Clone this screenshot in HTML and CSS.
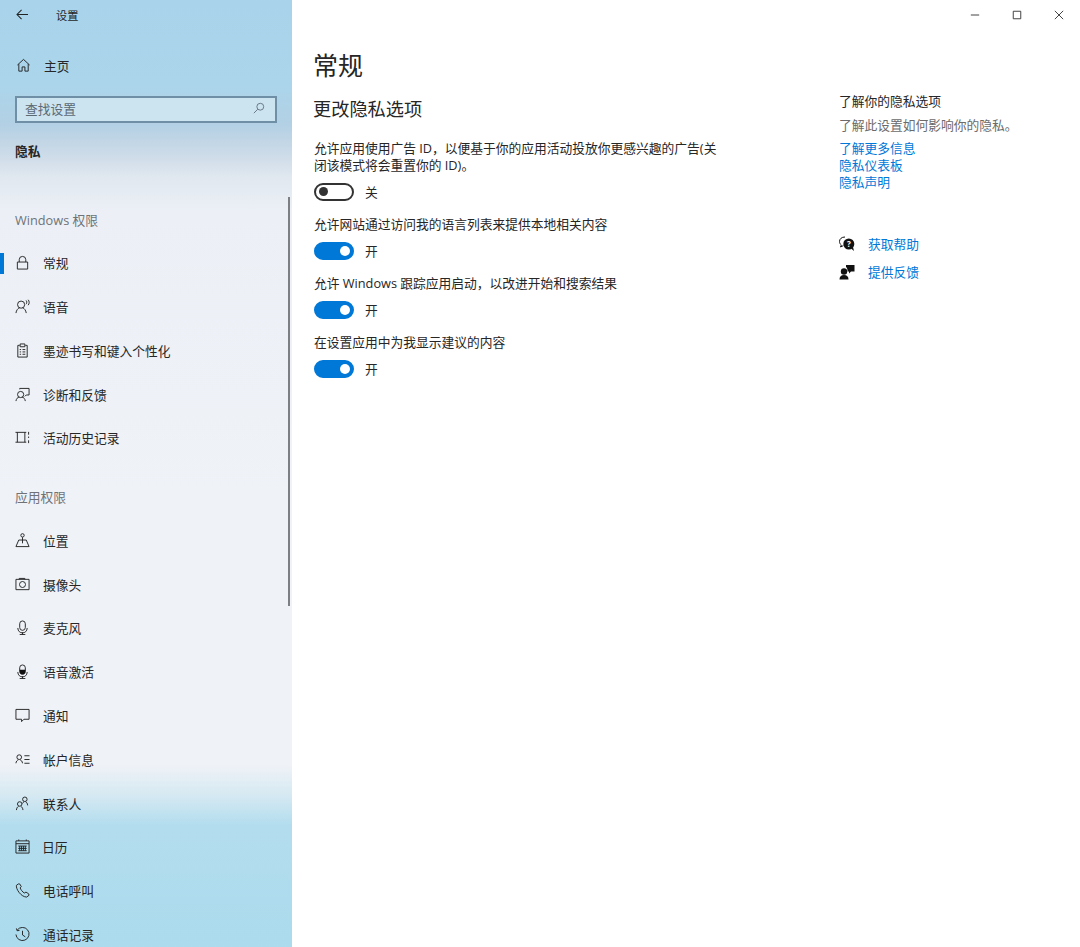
FILE: index.html
```html
<!DOCTYPE html>
<html lang="zh-CN">
<head>
  <meta charset="UTF-8" />
  <title>设置</title>
  <link rel="stylesheet" href="styles.css">
</head>
<body>

  <aside class="sidebar">
    <div class="titlebar">
      <svg class="back" viewBox="0 0 14 12"><path d="M13 6H1M6 1L1 6l5 5"/></svg>
      <span class="app-title">设置</span>
    </div>

    <a class="home-row">
      <svg class="icon" viewBox="0 0 16 16"><path d="M1.500 7.500L8 1.500l6.500 6M3 6.500v7.500h3.500v-4.500h3V14H13V6.500"/></svg>
      <span>主页</span>
    </a>

    <div class="search">
      <span>查找设置</span>
      <svg class="search-icon" viewBox="0 0 14 14"><circle cx="8.500" cy="5.500" r="4"/><path d="M5.500 8.500L1 13"/></svg>
    </div>

    <div class="crumb">隐私</div>

    <div class="group-label first">Windows 权限</div>
    <nav>
      <a class="nav-item active">
        <svg class="icon" viewBox="0 0 16 16"><path d="M2.500 7.500h11V15h-11zM4.500 7.500V5a3.500 3.500 0 0 1 7 0v2.500"/></svg>
        <span>常规</span>
      </a>
      <a class="nav-item">
        <svg class="icon" viewBox="0 0 16 16"><circle cx="6.500" cy="6" r="3.800"/><path d="M1 15c.4-3 2.200-5.200 4-5.600M12 15c-.4-3-2.200-5.200-4-5.600M11.800 1.500c1 .8 1 3 0 4M14 .8c1.500 1.400 1.500 4.300 0 5.800"/></svg>
        <span>语音</span>
      </a>
      <a class="nav-item">
        <svg class="icon" viewBox="0 0 16 16"><path d="M5 2.500H3v12.500h10V2.500h-2M5.500 1h5v3h-5zM5 7h1.500M5 9.500h1.500M5 12h1.500M8 7h3M8 9.500h3M8 12h3"/></svg>
        <span>墨迹书写和键入个性化</span>
      </a>
      <a class="nav-item">
        <svg class="icon" viewBox="0 0 16 16"><circle cx="6" cy="8" r="3.300"/><path d="M1 15c.4-2.500 1.800-4 3.500-4.300M11 15c-.4-2.500-1.800-4-3.500-4.300M5 2.500V1.500h10v7h-3l-1.500 1.500"/></svg>
        <span>诊断和反馈</span>
      </a>
      <a class="nav-item">
        <svg class="icon" viewBox="0 0 16 16"><path d="M.5 2.500h11.500M.5 13h11.500M2.500 2.500V13M10.500 2.500V13M14.500 2v3M14.500 7v1.500M14.500 11v3"/></svg>
        <span>活动历史记录</span>
      </a>
    </nav>

    <div class="group-label">应用权限</div>
    <nav>
      <a class="nav-item">
        <svg class="icon" viewBox="0 0 16 16"><circle cx="8" cy="2.500" r="1.800"/><path d="M8 4.500V11M4 7.500h8M4 7.500L1 14.500h14l-3-7"/></svg>
        <span>位置</span>
      </a>
      <a class="nav-item">
        <svg class="icon" viewBox="0 0 16 16"><path d="M1 2.500h14v11H1zM4.500 2.500V1.500h6v1"/><circle cx="8" cy="8" r="3.200"/></svg>
        <span>摄像头</span>
      </a>
      <a class="nav-item">
        <svg class="icon" viewBox="0 0 16 16"><rect x="5" y="1" width="6" height="10" rx="3"/><path d="M3 8.500c0 7 10 7 10 0M8 13v2.500M5 15.500h6"/></svg>
        <span>麦克风</span>
      </a>
      <a class="nav-item">
        <svg class="icon" viewBox="0 0 16 16"><rect x="5" y="1" width="6" height="10" rx="3"/><path class="solid" d="M5 6h6v2a3 3 0 0 1-6 0z"/><path d="M3 8.500c0 7 10 7 10 0M8 13v2.500M5 15.500h6"/></svg>
        <span>语音激活</span>
      </a>
      <a class="nav-item">
        <svg class="icon" viewBox="0 0 16 16"><path d="M1 1.500h14v10.500H9.500L7 14.500V12H1z"/></svg>
        <span>通知</span>
      </a>
      <a class="nav-item">
        <svg class="icon" viewBox="0 0 16 16"><circle cx="4.500" cy="5.500" r="2.500"/><path d="M1 12c.2-2 1.200-3.200 2.500-3.500M8 12c-.2-2-1.200-3.200-2.500-3.500M10 4h5.500M10 8h5.500M10 12h5.500"/></svg>
        <span>帐户信息</span>
      </a>
      <a class="nav-item">
        <svg class="icon" viewBox="0 0 16 16"><circle cx="5" cy="8.500" r="2.400"/><circle cx="10.500" cy="3.500" r="2.400"/><path d="M1.500 15c.2-2 1-3.400 2.200-3.800M8.500 15c-.2-2-1-3.400-2.200-3.800M13.500 10c-.2-2-1-3.400-2.200-3.800M8 8c.4-.9.800-1.500 1.500-1.800"/></svg>
        <span>联系人</span>
      </a>
      <a class="nav-item">
        <svg class="icon" viewBox="0 0 16 16"><path d="M1 2h14v13H1zM1 5h14M4 .5V2M12 .5V2M3.500 7.500h9M3.500 10h9M3.500 12.500h9M5 7.500v5M7 7.500v5M9 7.500v5M11 7.500v5"/></svg>
        <span class="tight">日历</span>
      </a>
      <a class="nav-item">
        <svg class="icon" viewBox="0 0 16 16"><path d="M3.500 1L1.500 2.500C.8 6.500 6.500 15 12.500 15l2.500-2-.5-1.500-2.800-1.800-1.800 1C8 9.500 6 7 5.500 5.200l1.200-1.400L5 1z"/></svg>
        <span>电话呼叫</span>
      </a>
      <a class="nav-item">
        <svg class="icon" viewBox="0 0 16 16"><path d="M2.200 3.500A7 7 0 1 1 1 8M1.500 1.500l.7 2.500 2.600-.4M8 4v4.500l3 2"/></svg>
        <span>通话记录</span>
      </a>
    </nav>

    <div class="scrollbar"></div>
  </aside>

  <div class="window">
    <div class="window-controls">
      <svg viewBox="0 0 12 12"><path d="M1 6h10"/></svg>
      <svg viewBox="0 0 12 12"><path d="M1.500 1.500h9v9h-9z"/></svg>
      <svg viewBox="0 0 12 12"><path d="M1 1l10 10M11 1L1 11"/></svg>
    </div>

    <div class="columns">
      <main>
        <h1>常规</h1>
        <h2>更改隐私选项</h2>

        <p class="option-text">允许应用使用广告 ID，以便基于你的应用活动投放你更感兴趣的广告(关闭该模式将会重置你的 ID)。</p>
        <div class="toggle-row first"><span class="toggle"></span><span>关</span></div>

        <p class="option-text">允许网站通过访问我的语言列表来提供本地相关内容</p>
        <div class="toggle-row"><span class="toggle on"></span><span>开</span></div>

        <p class="option-text">允许 Windows 跟踪应用启动，以改进开始和搜索结果</p>
        <div class="toggle-row"><span class="toggle on"></span><span>开</span></div>

        <p class="option-text">在设置应用中为我显示建议的内容</p>
        <div class="toggle-row"><span class="toggle on"></span><span>开</span></div>
      </main>

      <aside class="help">
        <h3>了解你的隐私选项</h3>
        <p>了解此设置如何影响你的隐私。</p>
        <a>了解更多信息</a>
        <a>隐私仪表板</a>
        <a>隐私声明</a>

        <div class="help-links">
          <a class="help-row">
            <svg viewBox="0 0 16 16"><path d="M6 1C2.500 1 .5 3 .5 5.500c0 1.500.7 2.700 1.800 3.500L1.500 11l2.800-1.300"/><circle class="solid" cx="9.800" cy="8" r="5.500"/><path class="solid" d="M12 12.500l3 2.500-1-4z"/><text x="9.800" y="11" class="mark">?</text></svg>
            <span>获取帮助</span>
          </a>
          <a class="help-row">
            <svg viewBox="0 0 16 16"><circle class="solid" cx="5" cy="7.500" r="3.200"/><path class="solid" d="M.5 15.500c0-3 1.500-4.500 4.500-4.500s4.500 1.500 4.500 4.500zM7 1h8.500v6.500H12L10 9.500V7.500H8.500c.2-2-.3-3.500-1.500-4.500z"/></svg>
            <span>提供反馈</span>
          </a>
        </div>
      </aside>
    </div>
  </div>

</body>
</html>
```

FILE: styles.css
```css
* { box-sizing: border-box; }

html, body { height: 100%; }

body {
  margin: 0;
  display: flex;
  overflow: hidden;
  background: #fff;
  color: #262626;
  font-family: "Open Sans", "Noto Sans CJK SC", "Liberation Sans", sans-serif;
  font-size: 12.75px;
  font-weight: 400;
}

/* sidebar */
.sidebar {
  position: relative;
  flex: 0 0 292px;
  height: 947px;
  overflow: hidden;
  background: linear-gradient(180deg,
    #a8d3ea 0, #abd5eb 85px, #b3d0e4 125px, #c9d9e7 150px, #e1e8f0 178px,
    #ecf0f6 212px, #eff2f7 500px, #eff2f7 765px, #d6e9f2 795px, #b3ddee 825px, #abdbed 947px);
}

.titlebar {
  display: flex;
  align-items: center;
  height: 30px;
  padding: 0 0 1px 16px;
}
.back {
  width: 13px;
  height: 11px;
  fill: none;
  stroke: #222;
  stroke-width: 1.1;
}
.app-title {
  margin-left: 27px;
  font-size: 11.2px;
}

.home-row {
  display: flex;
  align-items: center;
  gap: 13px;
  height: 44px;
  margin-top: 13px;
  padding-left: 16px;
}

.icon {
  flex: 0 0 15px;
  width: 15px;
  height: 15px;
  fill: none;
  stroke: #222;
  stroke-width: 1;
}
.icon .solid { fill: #111; stroke: none; }

.search {
  display: flex;
  justify-content: space-between;
  align-items: center;
  height: 27px;
  margin: 9px 15px 0;
  padding: 0 10px 3px 8px;
  border: 2px solid #6f8fa6;
  background: #cce3f0;
  color: #5b6a75;
}
.search-icon {
  width: 12px;
  height: 12px;
  fill: none;
  stroke: #5b6a75;
  stroke-width: 1;
}

.crumb {
  margin: 19px 0 0 15px;
  font-weight: 700;
  line-height: 18px;
}

.group-label {
  margin: 25.6px 0 0 15px;
  height: 33px;
  line-height: 24px;
  color: #6f7377;
}
.group-label.first { margin-top: 47.8px; }

.nav-item {
  position: relative;
  display: flex;
  align-items: center;
  gap: 13px;
  height: 43.8px;
  padding-left: 15px;
}
.nav-item .tight { margin-left: -1px; }
.nav-item.active::before {
  content: "";
  position: absolute;
  left: 0;
  top: 12px;
  width: 4px;
  height: 21px;
  background: #0078d7;
}

.scrollbar {
  position: absolute;
  top: 197px;
  right: 2px;
  width: 2px;
  height: 409px;
  background: #7c8084;
}

/* right side */
.window {
  flex: 1;
  display: flex;
  flex-direction: column;
  min-width: 0;
}

.window-controls {
  display: flex;
  justify-content: flex-end;
  gap: 32px;
  height: 30px;
  align-items: center;
  padding-right: 16px;
}
.window-controls svg {
  width: 10px;
  height: 10px;
  fill: none;
  stroke: #333;
  stroke-width: 1.1;
}

.columns {
  display: flex;
  padding-left: 22px;
}

main { width: 525px; }

h1 {
  margin: 17px 0 0 -1px;
  font-size: 25px;
  font-weight: 400;
  line-height: 36px;
}
h2 {
  margin: 13px 0 0 -1px;
  font-size: 18.2px;
  font-weight: 400;
  line-height: 26px;
}

.option-text {
  width: 410px;
  margin: 0;
  line-height: 17px;
  padding-top: 7px;
}
h2 + .option-text { padding-top: 18px; }

.toggle-row {
  display: flex;
  align-items: center;
  gap: 11px;
  height: 18px;
  margin: 9px 0 8px;
}
.toggle-row.first { margin: 8.5px 0 8px; }

.toggle {
  position: relative;
  width: 40px;
  height: 18px;
  border: 2px solid #333;
  border-radius: 9px;
}
.toggle::after {
  content: "";
  position: absolute;
  left: 2.5px;
  top: 2.5px;
  width: 9px;
  height: 9px;
  border-radius: 50%;
  background: #333;
}
.toggle.on {
  border-color: #0078d7;
  background: #0078d7;
}
.toggle.on::after {
  left: auto;
  top: 2px;
  right: 2.5px;
  width: 10px;
  height: 10px;
  background: #fff;
}

.help {
  padding-top: 62px;
  width: 215px;
}
.help h3 {
  margin: 0;
  font-size: 12.75px;
  font-weight: 400;
  line-height: 18px;
}
.help p {
  margin: 6px 0 0;
  color: #6b6b6b;
  line-height: 18px;
}
.help a {
  display: block;
  color: #0078d7;
  line-height: 17.2px;
}
.help p + a { margin-top: 6px; }

.help-links { margin-top: 38.5px; }
.help a.help-row {
  display: flex;
  align-items: center;
  gap: 13px;
  height: 28px;
}
.help-row svg {
  flex: 0 0 16px;
  width: 16px;
  height: 16px;
  fill: none;
  stroke: #111;
  stroke-width: 1;
}
.help-row .solid { fill: #111; stroke: none; }
.help-row .mark {
  fill: #fff;
  stroke: none;
  font-size: 8px;
  font-weight: 700;
  text-anchor: middle;
}
```
